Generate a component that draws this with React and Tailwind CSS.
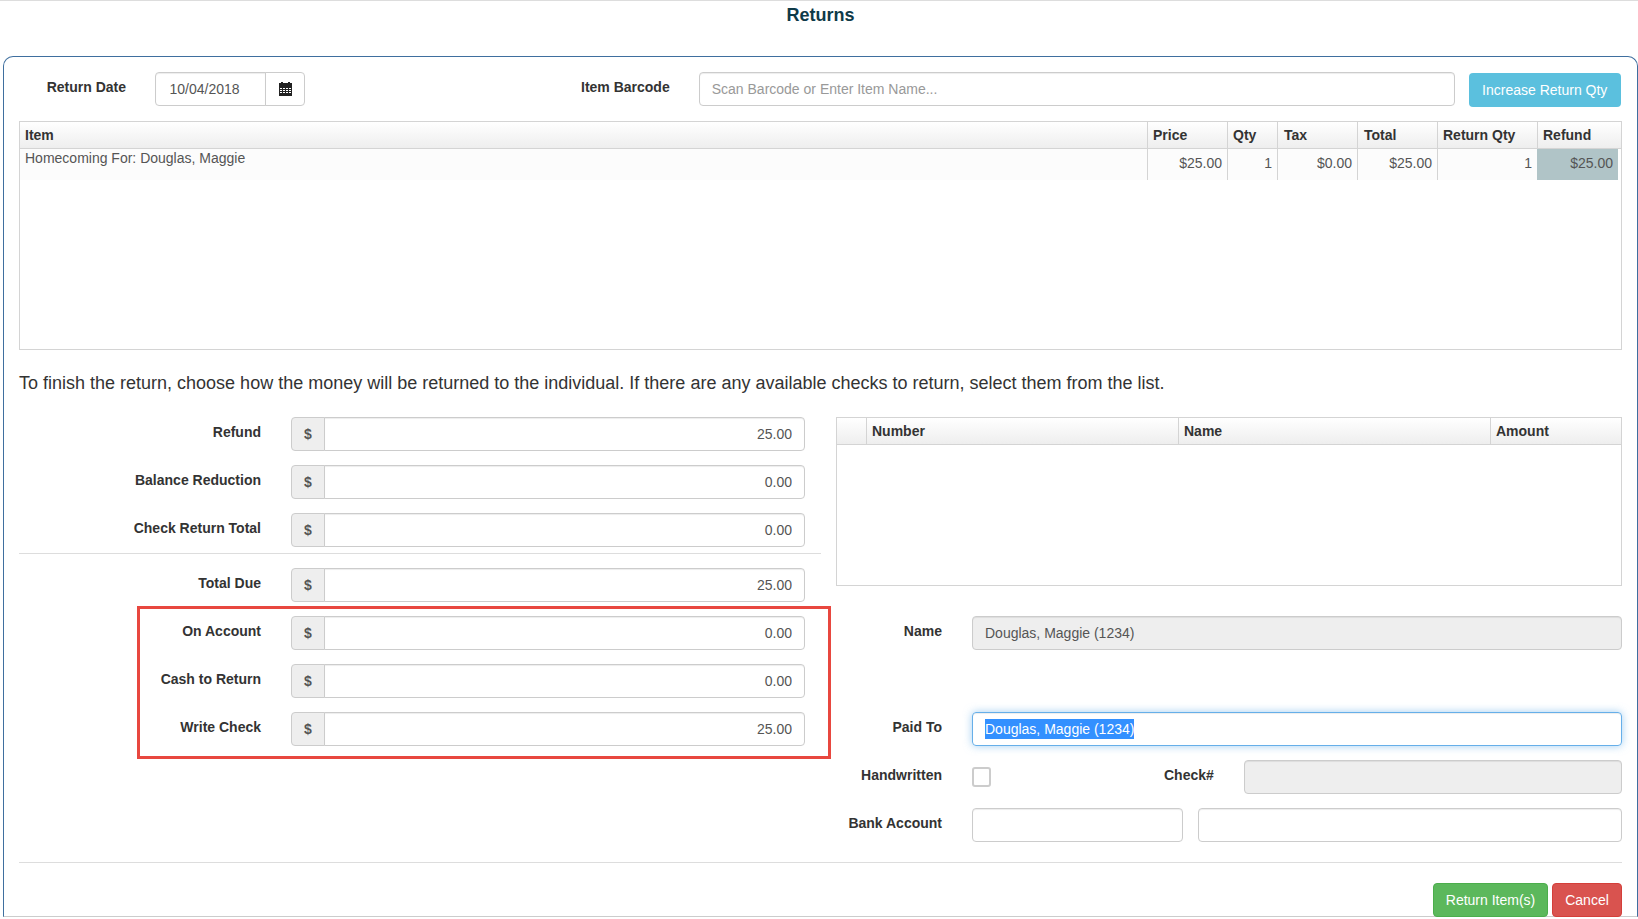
const inputBase = "h-[34px] rounded-[4px] border border-[#ccc] px-3 text-[14px] text-[#555] outline-none shadow-[inset_0_1px_1px_rgba(0,0,0,0.075)]";

function Label({ children, className = "" }) {
    return <div className={`shrink-0 whitespace-nowrap text-[14px] font-bold text-[#333] leading-[20px] pt-[5px] text-right ${className}`}>{children}</div>;
}

function MoneyRow({ label, value, className = "" }) {
    return (
        <div className={`flex h-[34px] ${className}`}>
            <Label className="w-[242px] h-[34px]">{label}</Label>
            <div className="flex ml-[30px] w-[514px] h-[34px]">
                <div className="w-[34px] h-[34px] bg-[#eee] border border-[#ccc] rounded-l-[4px] text-[14px] text-[#555] font-bold flex items-center justify-center">$</div>
                <input readOnly value={value} className={`${inputBase} flex-1 min-w-0 -ml-px rounded-l-none text-right bg-white`} />
            </div>
        </div>
    );
}

function HeadCell({ children, className = "" }) {
    return <div className={`h-full px-[5px] border-l border-[#d4d4d4] flex items-center text-[14px] font-bold text-[#333] ${className}`}>{children}</div>;
}

function BodyCell({ children, className = "" }) {
    return <div className={`h-full px-[5px] border-l border-[#d4d4d4] text-right text-[14px] text-[#555] leading-[28px] ${className}`}>{children}</div>;
}

function CalendarIcon() {
    return (
        <svg width="13" height="14" viewBox="0 0 13 14" fill="#222">
            <rect x="2" y="0" width="2" height="2" />
            <rect x="9" y="0" width="2" height="2" />
            <rect x="0" y="1" width="13" height="4" />
            <path fillRule="evenodd" d="M0 5h13v9H0z M1 6v1h2V6z M4 6v1h2V6z M7 6v1h2V6z M10 6v1h2V6z M1 8v1h2V8z M4 8v1h2V8z M7 8v1h2V8z M10 8v1h2V8z M1 10v1h2v-1z M4 10v1h2v-1z M7 10v1h2v-1z M10 10v1h2v-1z" />
        </svg>
    );
}

export default function App() {
    return (
        <div className="w-[1638px] h-[919px] overflow-hidden bg-white border-t border-[#ddd] font-['Liberation_Sans',Arial,sans-serif]">
            <div className="h-[55px] pl-[3px] text-center text-[18px] font-bold text-[#0e3a48] leading-[28px]">Returns</div>

            <div className="ml-[3px] h-[861px] border border-[#3f6f9f] border-b-[#ccc] rounded-t-[10px] px-[15px] pt-[15px]">
                {/* Top bar */}
                <div className="flex h-[34px]">
                    <Label className="w-[108px] pr-[1px]">Return Date</Label>
                    <div className="flex ml-[28px] w-[150px] h-[34px]">
                        <input readOnly value="10/04/2018" className={`${inputBase} w-[111px] pl-[13.5px] rounded-r-none bg-white`} />
                        <div className="flex-1 -ml-px border border-[#ccc] rounded-r-[4px] flex items-center justify-center">
                            <CalendarIcon />
                        </div>
                    </div>
                    <Label className="ml-[276px]">Item Barcode</Label>
                    <input readOnly placeholder="Scan Barcode or Enter Item Name..." className={`${inputBase} ml-[29px] w-[756px] bg-white placeholder:text-[#999]`} />
                    <div className="ml-[14px] w-[152px] h-[34px] mt-[1px] rounded-[4px] bg-[#5bc0de] text-white text-[14px] flex items-center justify-center">Increase Return Qty</div>
                </div>

                {/* Items table */}
                <div className="mt-[15px] w-[1603px] h-[229px] border border-[#d4d4d4]">
                    <div className="flex h-[27px] border-b border-[#d4d4d4] bg-gradient-to-b from-white to-[#eeeeee]">
                        <div className="w-[1127px] h-full px-[5px] flex items-center text-[14px] font-bold text-[#333]">Item</div>
                        <HeadCell className="w-[80px]">Price</HeadCell>
                        <HeadCell className="w-[50px]">Qty</HeadCell>
                        <HeadCell className="w-[80px] pl-[6px]">Tax</HeadCell>
                        <HeadCell className="w-[80px] pl-[6px]">Total</HeadCell>
                        <HeadCell className="w-[100px]">Return Qty</HeadCell>
                        <HeadCell className="flex-1">Refund</HeadCell>
                    </div>
                    <div className="flex h-[31px] w-[1598px] bg-[#fcfcfc]">
                        <div className="w-[1127px] h-full px-[5px] text-[14px] text-[#555] leading-[18px]">Homecoming For: Douglas, Maggie</div>
                        <BodyCell className="w-[80px]">$25.00</BodyCell>
                        <BodyCell className="w-[50px]">1</BodyCell>
                        <BodyCell className="w-[80px]">$0.00</BodyCell>
                        <BodyCell className="w-[80px]">$25.00</BodyCell>
                        <BodyCell className="w-[100px]">1</BodyCell>
                        <BodyCell className="flex-1 bg-[#b0c4c7] border-l-0">$25.00</BodyCell>
                    </div>
                </div>

                <p className="mt-[21px] h-[24px] text-[18px] leading-[24px] text-[#333] whitespace-nowrap">To finish the return, choose how the money will be returned to the individual. If there are any available checks to return, select them from the list.</p>

                <div className="relative mt-[22px] flex">
                    {/* Amounts */}
                    <div className="w-[802px] shrink-0">
                        <MoneyRow label="Refund" value="25.00" />
                        <MoneyRow label="Balance Reduction" value="0.00" className="mt-[14px]" />
                        <MoneyRow label="Check Return Total" value="0.00" className="mt-[14px]" />
                        <div className="mt-[6px] border-t border-[#ddd]" />
                        <MoneyRow label="Total Due" value="25.00" className="mt-[14px]" />
                        <MoneyRow label="On Account" value="0.00" className="mt-[14px]" />
                        <MoneyRow label="Cash to Return" value="0.00" className="mt-[14px]" />
                        <MoneyRow label="Write Check" value="25.00" className="mt-[14px]" />
                    </div>

                    {/* Checks table and payee */}
                    <div className="ml-[15px] w-[786px]">
                        <div className="h-[169px] border border-[#d4d4d4]">
                            <div className="flex h-[27px] border-b border-[#d4d4d4] bg-gradient-to-b from-white to-[#eeeeee]">
                                <div className="w-[29px]" />
                                <HeadCell className="w-[312px] border-[#bbb]">Number</HeadCell>
                                <HeadCell className="w-[312px]">Name</HeadCell>
                                <HeadCell className="flex-1">Amount</HeadCell>
                            </div>
                        </div>

                        <div className="flex mt-[30px] h-[34px]">
                            <Label className="w-[106px]">Name</Label>
                            <input readOnly value="Douglas, Maggie (1234)" className={`${inputBase} ml-[30px] w-[650px] bg-[#eee]`} />
                        </div>
                        <div className="flex mt-[62px] h-[34px]">
                            <Label className="w-[106px]">Paid To</Label>
                            <div className="ml-[30px] w-[650px] h-[34px] rounded-[4px] border border-[#66afe9] px-3 text-[14px] leading-[32px] shadow-[inset_0_1px_1px_rgba(0,0,0,0.075),0_0_8px_rgba(102,175,233,0.6)]">
                                <span className="bg-[#3390ff] text-white py-[2px]">Douglas, Maggie (1234)</span>
                            </div>
                        </div>
                        <div className="flex mt-[14px] h-[34px]">
                            <Label className="w-[106px]">Handwritten</Label>
                            <div className="ml-[30px] mt-[7px] w-[19px] h-[20px] rounded-[3px] border-2 border-[#ccc] bg-white" />
                            <Label className="ml-[173px]">Check#</Label>
                            <div className={`${inputBase} ml-[30px] w-[378px] bg-[#eee]`} />
                        </div>
                        <div className="flex mt-[14px] h-[34px]">
                            <Label className="w-[106px]">Bank Account</Label>
                            <input readOnly className={`${inputBase} ml-[30px] w-[211px] bg-white`} />
                            <input readOnly className={`${inputBase} ml-[15px] w-[424px] bg-white`} />
                        </div>
                    </div>

                    {/* Highlight box */}
                    <div className="absolute left-[118px] top-[189px] w-[694px] h-[153px] border-[3px] border-[#e8473f] pointer-events-none" />
                </div>

                <div className="mt-[20px] w-[1603px] border-t border-[#ddd]" />
                <div className="mt-[20px] w-[1603px] flex justify-end gap-[4px]">
                    <div className="w-[115px] h-[34px] rounded-[4px] bg-[#5cb85c] border border-[#4cae4c] text-white text-[14px] flex items-center justify-center">Return Item(s)</div>
                    <div className="w-[70px] h-[34px] rounded-[4px] bg-[#d9534f] border border-[#d43f3a] text-white text-[14px] flex items-center justify-center">Cancel</div>
                </div>
            </div>
        </div>
    );
}
